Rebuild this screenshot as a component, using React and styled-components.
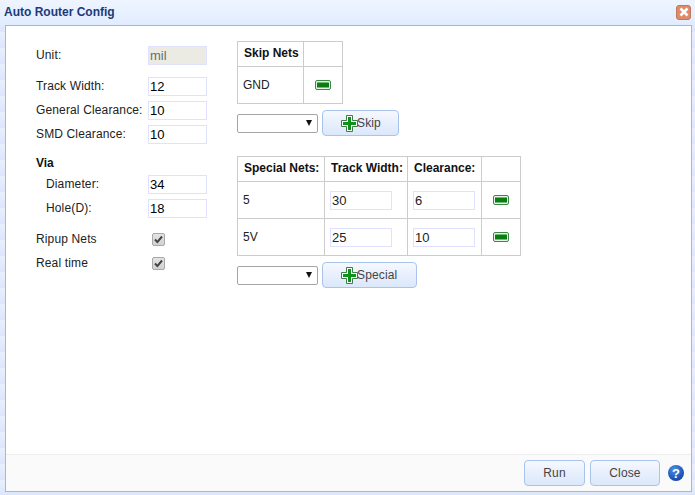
import styled, { createGlobalStyle } from "styled-components"

const GlobalStyle = createGlobalStyle`
  html, body {
    margin: 0;
    padding: 0;
    background: #e0ecff;
  }
  body {
    font-family: "Liberation Sans", Arial, sans-serif;
    font-size: 12px;
    color: #222;
  }
`

const PlusIcon = () => (
  <svg width="17" height="17" viewBox="0 0 17 17">
    <path d="M5.5.5h6v5h5v6h-5v5h-6v-5h-5v-6h5z" fill="#fff" stroke="#3c7f46" strokeWidth="1" strokeLinejoin="round" />
    <path d="M7 2h3v5h5v3h-5v5H7v-5H2V7h5z" fill="#0c9416" />
  </svg>
)

const MinusIcon = () => (
  <svg width="16" height="10" viewBox="0 0 16 10">
    <rect x="0.5" y="0.5" width="15" height="9" rx="1.5" fill="#e6f3e6" stroke="#3a8a46" />
    <rect x="2" y="2.5" width="12" height="5" fill="#0a7d10" />
  </svg>
)

const HelpIcon = () => (
  <svg width="16" height="16" viewBox="0 0 16 16">
    <defs>
      <radialGradient id="helpBall" cx="0.4" cy="0.3" r="0.8">
        <stop offset="0" stopColor="#4f8fe6" />
        <stop offset="1" stopColor="#0a3da0" />
      </radialGradient>
    </defs>
    <circle cx="8" cy="8" r="8" fill="url(#helpBall)" />
    <text x="8" y="12.5" textAnchor="middle" fontSize="13" fontWeight="700" fontFamily="Liberation Sans" fill="#fff">?</text>
  </svg>
)

const CloseIcon = () => (
  <svg width="10" height="10" viewBox="0 0 10 10">
    <path d="M1.5 1.5l7 7M8.5 1.5l-7 7" stroke="#fff" strokeWidth="2.6" />
  </svg>
)

const CheckMark = () => (
  <svg width="11" height="11" viewBox="0 0 11 11">
    <path d="M2 5.5l2.4 2.6L9 2.5" fill="none" stroke="#444" strokeWidth="2" />
  </svg>
)

export default function App() {
  return (
    <>
      <GlobalStyle />
      <Window>
        <TitleBar>
          <Title>Auto Router Config</Title>
          <CloseBox><CloseIcon /></CloseBox>
        </TitleBar>
        <Panel>
          <Content>
            <Form>
              <Row $top={0}>
                <Label>Unit:</Label>
                <TextInput value="mil" readOnly $disabled />
              </Row>
              <Row $top={12}>
                <Label>Track Width:</Label>
                <TextInput defaultValue="12" />
              </Row>
              <Row $top={5}>
                <Label>General Clearance:</Label>
                <TextInput defaultValue="10" />
              </Row>
              <Row $top={5}>
                <Label>SMD Clearance:</Label>
                <TextInput defaultValue="10" />
              </Row>
              <ViaHead>Via</ViaHead>
              <Row $top={5}>
                <Label $indent>Diameter:</Label>
                <TextInput defaultValue="34" />
              </Row>
              <Row $top={5}>
                <Label $indent>Hole(D):</Label>
                <TextInput defaultValue="18" />
              </Row>
              <CheckRow $top={15}>
                <Label>Ripup Nets</Label>
                <CheckBox><CheckMark /></CheckBox>
              </CheckRow>
              <CheckRow $top={10}>
                <Label>Real time</Label>
                <CheckBox><CheckMark /></CheckBox>
              </CheckRow>
            </Form>
            <Tables>
              <NetTable>
                <thead>
                  <tr>
                    <Th $w={66}>Skip Nets</Th>
                    <Th $w={39}></Th>
                  </tr>
                </thead>
                <tbody>
                  <tr>
                    <Td>GND</Td>
                    <IconCell><MinusIcon /></IconCell>
                  </tr>
                </tbody>
              </NetTable>
              <AddRow>
                <FakeSelect />
                <AddButton $w={77}><PlusIcon />Skip</AddButton>
              </AddRow>
              <Spacer />
              <NetTable>
                <thead>
                  <tr>
                    <Th $w={87}>Special Nets:</Th>
                    <Th $w={83}>Track Width:</Th>
                    <Th $w={74}>Clearance:</Th>
                    <Th $w={39}></Th>
                  </tr>
                </thead>
                <tbody>
                  {specialNets.map(({ name, width, clearance }) => (
                    <tr key={name}>
                      <Td>{name}</Td>
                      <Td><CellInput defaultValue={width} /></Td>
                      <Td><CellInput defaultValue={clearance} /></Td>
                      <IconCell><MinusIcon /></IconCell>
                    </tr>
                  ))}
                </tbody>
              </NetTable>
              <AddRow>
                <FakeSelect />
                <AddButton $w={95}><PlusIcon />Special</AddButton>
              </AddRow>
            </Tables>
          </Content>
          <Footer>
            <FooterButton $w={61}>Run</FooterButton>
            <FooterButton $w={70}>Close</FooterButton>
            <HelpWrap><HelpIcon /></HelpWrap>
          </Footer>
        </Panel>
      </Window>
    </>
  )
}

const specialNets = [
  { name: "5", width: "30", clearance: "6" },
  { name: "5V", width: "25", clearance: "10" },
]

const Window = styled.div`
  width: 695px;
  height: 495px;
  box-sizing: border-box;
  padding: 0 3px 3px 5px;
  display: flex;
  flex-direction: column;
  background:
    linear-gradient(#eff5ff 0, #e0ecff 25px, transparent 25px),
    repeating-linear-gradient(#e8f0fe 0, #dbe6fb 16px);
  overflow: hidden;
`

const TitleBar = styled.div`
  height: 25px;
  flex: none;
  display: flex;
  align-items: center;
  justify-content: space-between;
`

const Title = styled.div`
  font-size: 12px;
  font-weight: 700;
  color: #1c3a78;
  margin: -1px 0 0 -1px;
`

const CloseBox = styled.div`
  width: 15px;
  height: 15px;
  margin: -1px 1px 0 0;
  box-sizing: border-box;
  border-radius: 3px;
  background: #e08a68;
  border: 1px solid #b97a60;
  display: flex;
  align-items: center;
  justify-content: center;
`

const Panel = styled.div`
  flex: 1;
  min-height: 0;
  background: #fff;
  border: 1px solid #9db8e8;
  display: flex;
  flex-direction: column;
`

const Content = styled.div`
  flex: 1;
  min-height: 0;
  display: flex;
  padding: 15px 0 0 30px;
`

const Form = styled.div`
  width: 201px;
  flex: none;
  padding-top: 5px;
`

const Row = styled.div`
  display: flex;
  align-items: center;
  height: 19px;
  margin-top: ${({ $top }) => $top}px;
`

const CheckRow = styled(Row)`
  height: 14px;
`

const Label = styled.div`
  width: 112px;
  flex: none;
  padding-left: ${({ $indent }) => ($indent ? "10px" : "0")};
  box-sizing: border-box;
  white-space: nowrap;
  letter-spacing: 0.14px;
  position: relative;
  top: -1px;
`

const TextInput = styled.input`
  width: 59px;
  height: 19px;
  box-sizing: border-box;
  border: 1px solid #e0e0ff;
  background: ${({ $disabled }) => ($disabled ? "#ebebe4" : "#fff")};
  color: ${({ $disabled }) => ($disabled ? "#6d6d6d" : "#000")};
  font-family: "Liberation Sans", Arial, sans-serif;
  font-size: 13px;
  padding: 0 1px;
  outline: none;
`

const ViaHead = styled.div`
  font-weight: 700;
  font-size: 12px;
  color: #111;
  margin-top: 12px;
  height: 14px;
  line-height: 14px;
`

const CheckBox = styled.div`
  width: 13px;
  height: 13px;
  margin: -1px 0 0 4px;
  box-sizing: border-box;
  border: 1px solid #a8a8a8;
  border-radius: 2px;
  background: linear-gradient(#e4e4e4, #d2d2d2);
  display: flex;
  align-items: center;
  justify-content: center;
  svg {
    flex: none;
  }
`

const Tables = styled.div`
  display: flex;
  flex-direction: column;
  align-items: flex-start;
`

const NetTable = styled.table`
  border-collapse: collapse;
  table-layout: fixed;
  font-size: 12px;
  color: #222;
  border: 1px solid #ccc;
`

const Th = styled.th`
  width: ${({ $w }) => $w}px;
  height: 25px;
  padding: 0 0 2px 6px;
  box-sizing: border-box;
  border: 1px solid #ccc;
  text-align: left;
  font-weight: 700;
  color: #111;
`

const Td = styled.td`
  height: 37px;
  padding: 0 5px;
  box-sizing: border-box;
  border: 1px solid #ccc;
`

const IconCell = styled(Td)`
  text-align: center;
  svg {
    display: block;
    margin: 0 auto;
  }
`

const CellInput = styled.input`
  width: 62px;
  height: 19px;
  box-sizing: border-box;
  border: 1px solid #e0e0ff;
  background: #fff;
  color: #222;
  font-family: "Liberation Sans", Arial, sans-serif;
  font-size: 13px;
  padding: 0 1px;
  outline: none;
  display: block;
`

const AddRow = styled.div`
  display: flex;
  align-items: center;
  gap: 4px;
  margin-top: 6px;
`

const FakeSelect = styled.div`
  width: 81px;
  height: 19px;
  box-sizing: border-box;
  border: 1px solid #a6a6a6;
  border-radius: 2px;
  background: #fff;
  position: relative;
  &::after {
    content: "";
    position: absolute;
    right: 5px;
    top: 5px;
    border-left: 3px solid transparent;
    border-right: 3px solid transparent;
    border-top: 6px solid #111;
  }
`

const Spacer = styled.div`
  height: 20px;
`

const buttonSkin = `
  box-sizing: border-box;
  height: 26px;
  border: 1px solid #a9c4ec;
  border-radius: 4px;
  background: linear-gradient(#f5f8fe, #dbe7fb);
  font-family: "Liberation Sans", Arial, sans-serif;
  font-size: 12px;
  letter-spacing: 0.14px;
  color: #444;
`

const AddButton = styled.button`
  ${buttonSkin}
  width: ${({ $w }) => $w}px;
  display: flex;
  align-items: center;
  padding: 0 0 0 18px;
  svg {
    flex: none;
    margin-right: -1px;
  }
`

const Footer = styled.div`
  flex: none;
  height: 37px;
  box-sizing: border-box;
  background: #fafafa;
  border-top: 1px solid #eee;
  display: flex;
  align-items: center;
  justify-content: flex-end;
  padding: 0 7px 0 0;
  gap: 5px;
`

const FooterButton = styled.button`
  ${buttonSkin}
  width: ${({ $w }) => $w}px;
`

const HelpWrap = styled.div`
  width: 16px;
  height: 16px;
  margin-left: 3px;
  svg {
    display: block;
  }
`
